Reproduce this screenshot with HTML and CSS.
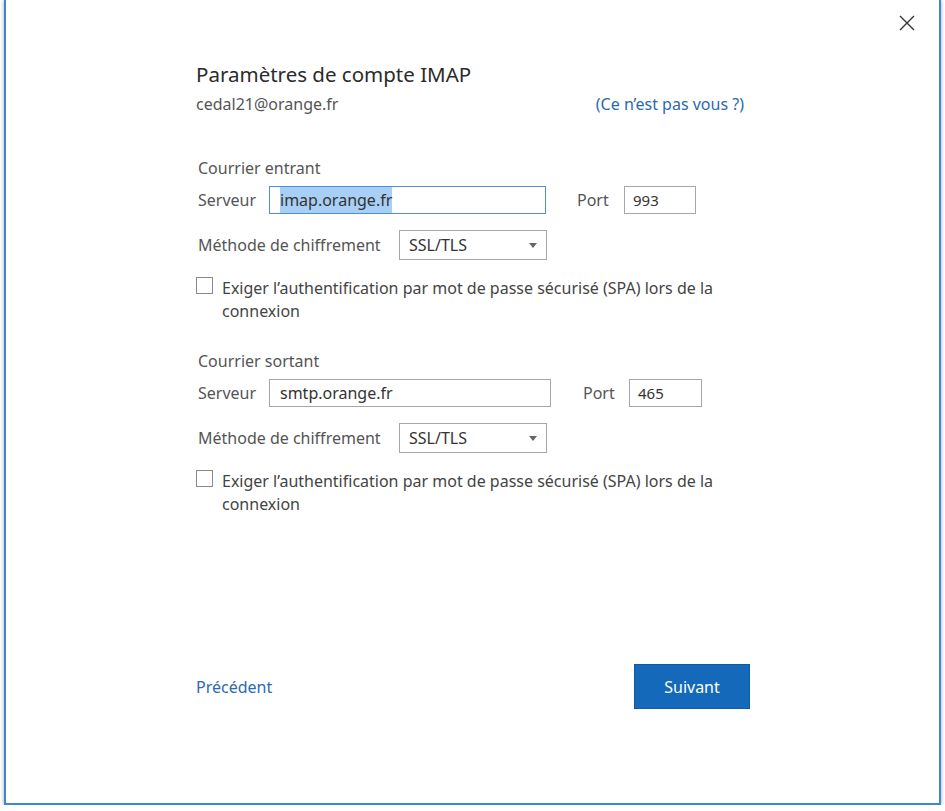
FILE: index.html
```html
<!DOCTYPE html>
<html lang="fr">
<head>
    <meta charset="UTF-8">
    <title>Paramètres de compte IMAP</title>
    <link rel="stylesheet" href="styles.css">
</head>
<body>
    <div class="window">
        <button class="close" aria-label="Fermer">
            <svg width="16" height="16" viewBox="0 0 16 16">
                <path d="M1 1 L15 15 M15 1 L1 15" stroke="#333" stroke-width="1.4" fill="none"/>
            </svg>
        </button>

        <div class="content">
            <h1>Paramètres de compte IMAP</h1>
            <div class="account">
                <span class="email">cedal21@orange.fr</span>
                <a href="#" class="link">(Ce n’est pas vous ?)</a>
            </div>

            <!-- serveur entrant -->
            <div class="section">
                <h2>Courrier entrant</h2>
                <div class="server-row">
                    <span class="label server-label">Serveur</span>
                    <div class="field field-focus server-in"><span class="selected">imap.orange.fr</span></div>
                    <span class="label port-label">Port</span>
                    <div class="field port-in">993</div>
                </div>
                <div class="method-row">
                    <span class="label method-label">Méthode de chiffrement</span>
                    <div class="select">SSL/TLS<span class="caret"></span></div>
                </div>
                <label class="check">
                    <span class="box"></span>
                    <span class="check-text">Exiger l’authentification par mot de passe sécurisé (SPA) lors de la connexion</span>
                </label>
            </div>

            <!-- serveur sortant -->
            <div class="section section-out">
                <h2>Courrier sortant</h2>
                <div class="server-row">
                    <span class="label server-label">Serveur</span>
                    <div class="field server-out">smtp.orange.fr</div>
                    <span class="label port-label port-label-out">Port</span>
                    <div class="field port-out">465</div>
                </div>
                <div class="method-row">
                    <span class="label method-label">Méthode de chiffrement</span>
                    <div class="select">SSL/TLS<span class="caret"></span></div>
                </div>
                <label class="check">
                    <span class="box"></span>
                    <span class="check-text">Exiger l’authentification par mot de passe sécurisé (SPA) lors de la connexion</span>
                </label>
            </div>

            <div class="footer">
                <a href="#" class="link back">Précédent</a>
                <button class="btn">Suivant</button>
            </div>
        </div>
    </div>
</body>
</html>
```

FILE: styles.css
```css
* {
    margin: 0;
    padding: 0;
    box-sizing: border-box;
}

body {
    background: #fff;
    font-family: 'Noto Sans', 'Open Sans', sans-serif;
    color: #444;
    overflow: hidden;
}

.window {
    position: relative;
    margin-left: 4px;
    width: 937px;
    height: 805px;
    background: #fff;
    border: 2px solid #3b87d4;
    border-top: none;
    box-shadow: 0 0 4px rgba(0, 0, 0, 0.35);
}

.close {
    position: absolute;
    top: 15px;
    right: 24px;
    width: 16px;
    height: 16px;
    border: none;
    background: none;
}

.content {
    width: 554px;
    margin-left: 190px;
    padding-top: 60px;
}

h1 {
    font-size: 20.5px;
    font-weight: 400;
    line-height: 28px;
    color: #2b2b2b;
}

.account {
    display: flex;
    justify-content: space-between;
    width: 548px;
    margin-top: 5px;
    font-size: 16px;
    line-height: 22px;
}

.email {
    color: #555;
}

.link {
    color: #2a6ab0;
    text-decoration: none;
}

.section {
    margin-top: 42px;
    padding-left: 2px;
}

.section-out {
    margin-top: 27px;
}

h2 {
    font-size: 16px;
    font-weight: 400;
    line-height: 22px;
    color: #555;
}

.label {
    font-size: 16px;
    color: #555;
}

.server-row {
    display: flex;
    align-items: center;
    margin-top: 7px;
}

.server-label {
    width: 71px;
}

.port-label {
    margin-left: 31px;
    width: 47px;
}

.port-label-out {
    margin-left: 32px;
    width: 46px;
}

.field {
    height: 28px;
    border: 1px solid #a6a6a6;
    padding: 0 10px;
    font-size: 16px;
    line-height: 26px;
    color: #333;
    white-space: nowrap;
}

.field-focus {
    border-color: #4a8fd8;
}

.selected {
    background: #a8cff5;
    padding: 2px 0;
}

.server-in {
    width: 277px;
}

.port-in {
    width: 72px;
    padding: 0 8px;
    font-size: 15px;
}

.server-out {
    width: 282px;
}

.port-out {
    width: 73px;
    padding: 0 8px;
    font-size: 15px;
}

.method-row {
    display: flex;
    align-items: center;
    margin-top: 16px;
}

.method-label {
    width: 201px;
}

.select {
    position: relative;
    width: 148px;
    height: 30px;
    border: 1px solid #a6a6a6;
    padding: 0 9px;
    font-size: 16px;
    line-height: 28px;
    color: #333;
}

.caret {
    position: absolute;
    right: 9px;
    top: 12px;
    border-left: 4px solid transparent;
    border-right: 4px solid transparent;
    border-top: 5px solid #666;
}

.check {
    display: flex;
    align-items: flex-start;
    margin-top: 17px;
    margin-left: -2px;
}

.box {
    flex: none;
    width: 17px;
    height: 17px;
    border: 1px solid #8a8a8a;
    background: #fff;
}

.check-text {
    margin-left: 9px;
    width: 515px;
    font-size: 16px;
    line-height: 23px;
    color: #444;
}

.footer {
    display: flex;
    justify-content: space-between;
    align-items: center;
    margin-top: 148px;
    width: 554px;
}

.back {
    font-size: 16px;
}

.btn {
    width: 116px;
    height: 45px;
    background: #1469bb;
    border: 1px solid #0e5aa5;
    color: #fff;
    font-family: inherit;
    font-size: 16px;
}
```
